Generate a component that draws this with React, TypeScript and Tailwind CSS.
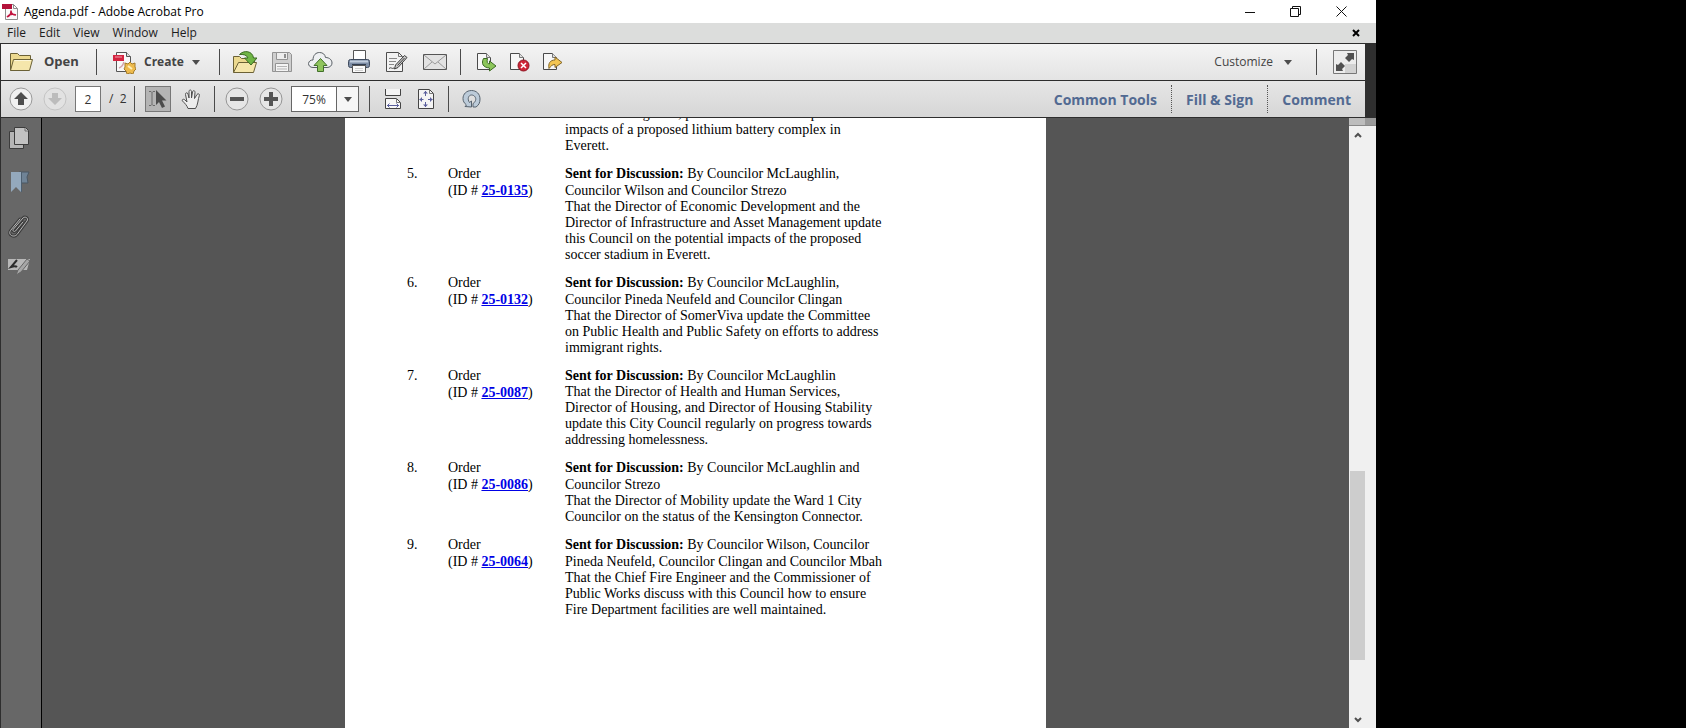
import type { ReactNode } from "react";

type AgendaItem = {
  no: string;
  id: string;
  by: string;
  text: string;
};

const agenda: AgendaItem[] = [
  {
    no: "5.",
    id: "25-0135",
    by: "By Councilor McLaughlin, Councilor Wilson and Councilor Strezo",
    text: "That the Director of Economic Development and the Director of Infrastructure and Asset Management update this Council on the potential impacts of the proposed soccer stadium in Everett.",
  },
  {
    no: "6.",
    id: "25-0132",
    by: "By Councilor McLaughlin, Councilor Pineda Neufeld and Councilor Clingan",
    text: "That the Director of SomerViva update the Committee on Public Health and Public Safety on efforts to address immigrant rights.",
  },
  {
    no: "7.",
    id: "25-0087",
    by: "By Councilor McLaughlin",
    text: "That the Director of Health and Human Services, Director of Housing, and Director of Housing Stability update this City Council regularly on progress towards addressing homelessness.",
  },
  {
    no: "8.",
    id: "25-0086",
    by: "By Councilor McLaughlin and Councilor Strezo",
    text: "That the Director of Mobility update the Ward 1 City Councilor on the status of the Kensington Connector.",
  },
  {
    no: "9.",
    id: "25-0064",
    by: "By Councilor Wilson, Councilor Pineda Neufeld, Councilor Clingan and Councilor Mbah",
    text: "That the Chief Fire Engineer and the Commissioner of Public Works discuss with this Council how to ensure Fire Department facilities are well maintained.",
  },
];

const menus = ["File", "Edit", "View", "Window", "Help"];

const panels = ["Common Tools", "Fill & Sign", "Comment"];

const Icon = ({
  w = 24,
  h = 24,
  children,
}: {
  w?: number;
  h?: number;
  children: ReactNode;
}) => (
  <svg
    width={w}
    height={h}
    viewBox={`0 0 ${w} ${h}`}
    fill="none"
    aria-hidden="true"
    className="block shrink-0"
  >
    {children}
  </svg>
);

const IconButton = ({
  label,
  className = "",
  children,
}: {
  label: string;
  className?: string;
  children: ReactNode;
}) => (
  <button
    type="button"
    aria-label={label}
    className={`flex shrink-0 items-center justify-center ${className}`}
  >
    {children}
  </button>
);

const Separator = () => <div className="h-[26px] w-px shrink-0 bg-[#4a4a4a]" />;

const Caret = () => (
  <Icon w={8} h={5}>
    <path d="M0 0h8L4 5z" fill="#4d4d4d" />
  </Icon>
);

/* Page outline with a folded corner, shared by the export icons */
const Sheet = () => (
  <>
    <path d="M.5 1.500h9l4 4v12H.5z" fill="#f7f7f7" stroke="#4a4a4a" />
    <path d="M9.500 1.500v4h4" fill="#dedede" stroke="#777" />
  </>
);

const AppIcon = () => (
  <Icon w={16} h={17}>
    <path d="M3.500 1.500h8l4 4v11h-12z" fill="#fafafa" stroke="#8c8c8c" />
    <path d="M11.500 1.500v4h4" stroke="#8c8c8c" />
    <path d="M0 1h10v5H0z" fill="#b3123a" />
    <path
      d="M5 14c3-1 4-4 4-6.500M9 7.500c0 3 2 4.500 5 4.500M5 14c2-2.500 6-3 9-2"
      stroke="#c2143f"
      strokeWidth="1.500"
    />
  </Icon>
);

const FolderIcon = () => (
  <Icon w={25} h={20}>
    <path d="M1.500 18.500v-17h7l2 2h11v4" fill="#ecd98f" stroke="#6b6136" />
    <path d="M1.500 18.500l3-11h19l-3 11z" fill="#f5e6ab" stroke="#6b6136" />
    <path d="M5.500 8.500H22" stroke="#fdf7d9" />
  </Icon>
);

const CreateIcon = () => (
  <Icon w={23} h={23}>
    <path d="M3.500 1.500h10l4 4v15h-14z" fill="#f8f8f8" stroke="#555" />
    <path d="M13.500 1.500v4h4" fill="#ddd" stroke="#555" />
    <path d="M0 4h11v6H0z" fill="#d42440" />
    <path d="M2 6h7" stroke="#f0a0ac" />
    <path d="M6 17c3-1 4-3 5-6" stroke="#d5a5ac" strokeWidth="1.500" />
    <path
      d="M12 12l3 1 2-2 2 2 3-1v4l1 2-2 2-1 3-3-1-3 1-1-3-2-2 1-2z"
      fill="#eebb4d"
      stroke="#a57d2c"
    />
    <path d="M15 15l4 3" stroke="#fff0b8" strokeWidth="2" />
  </Icon>
);

const OpenFromIcon = () => (
  <Icon w={25} h={24}>
    <path d="M1.500 22.500v-16h6l2 2h13v5" fill="#ecd98f" stroke="#6b6136" />
    <path d="M1.500 22.500l5-10h18l-3 10z" fill="#f5e6ab" stroke="#6b6136" />
    <path
      d="M7.500 4.500c4-4.500 13-4 14 3.500H25l-6 7-6.500-7H16c-1-3-5-4-8.500-3.500z"
      fill="#6fb545"
      stroke="#3c6b24"
    />
  </Icon>
);

const SaveIcon = () => (
  <Icon w={21} h={21}>
    <path d="M.500.500h17l2 2v17H.500z" fill="#cfcfcf" stroke="#939393" />
    <path d="M4.500.500h11v7h-11z" fill="#ededed" stroke="#939393" />
    <path d="M12 2h2v4h-2z" fill="#8d8d8d" />
    <path d="M3.500 11.500h13v8h-13z" fill="#f4f4f4" stroke="#939393" />
    <path d="M5 14.500h10M5 17h10" stroke="#b5b5b5" />
  </Icon>
);

const CloudIcon = () => (
  <Icon w={25} h={22}>
    <path
      d="M5 16.500C2 16.500.500 14.500.500 12.500 1 10 2.500 9 5 9c0-5 3-7.500 6.500-7.500s5.500 2 6 5c4 0 6.500 2.500 6.500 5.500 0 2.500-2 4.500-5 4.500z"
      fill="#eef0f2"
      stroke="#5a6066"
    />
    <path
      d="M12.500 7.500l6.500 7h-3.500v6h-6v-6H6z"
      fill="#8fc45d"
      stroke="#41702a"
    />
  </Icon>
);

const PrintIcon = () => (
  <Icon w={23} h={24}>
    <path d="M5.500 10V.500h12V10" fill="#fff" stroke="#555" />
    <rect x=".5" y="9.500" width="21" height="8" rx="2" fill="#7e8ea6" stroke="#3f4b5e" />
    <path d="M2 11.500h18" stroke="#c1cddd" strokeWidth="2" />
    <path d="M4 14.500h14" stroke="#333f52" />
    <path d="M4.500 15.500h13v7h-13z" fill="#fafafa" stroke="#555" />
    <path d="M7 18.500h8M7 20.500h8" stroke="#d0d0d0" />
  </Icon>
);

const SignIcon = () => (
  <Icon w={22} h={22}>
    <path d="M.500 1.500h12l4 4v15H.500z" fill="#f3f3f3" stroke="#4d4d4d" />
    <path d="M12.500 1.500v4h4" stroke="#777" />
    <path d="M3 7.500h8M3 10.500h7M3 13.500h5" stroke="#8a8a8a" />
    <path d="M3 17.500c2-2 3 1 5-.500" stroke="#444" />
    <path d="M18.500 4.500l2.500 2-9 10-3.500 1.500 1-4z" fill="#c9c9c9" stroke="#3d3d3d" />
    <path d="M11.500 14.500l7-7.500" stroke="#3d3d3d" />
  </Icon>
);

const MailIcon = () => (
  <Icon w={25} h={17}>
    <path d="M.500.500h23v15H.500z" fill="#e2e2e2" stroke="#555" />
    <path d="M1 1l11 9 11-9M1 15l8-7M23 15l-8-7" stroke="#9a9a9a" />
  </Icon>
);

const SendIcon = () => (
  <Icon w={20} h={20}>
    <Sheet />
    <path
      d="M6.500 6.500c-2.500 5-.500 9 6 9.500v3l6.500-5-6.500-5v3c-2 0-3-2-2-5.500z"
      fill="#8cc65a"
      stroke="#3c6b24"
    />
  </Icon>
);

const RemoveIcon = () => (
  <Icon w={20} h={20}>
    <Sheet />
    <circle cx="13.500" cy="13.500" r="5.500" fill="#cf2436" stroke="#8c1522" />
    <path d="M11 11l5 5M16 11l-5 5" stroke="#fff" strokeWidth="1.500" />
  </Icon>
);

const ShareIcon = () => (
  <Icon w={20} h={20}>
    <Sheet />
    <path
      d="M6 16.500c-1-5 1-8.500 6-8.500V5l7 5.500-7 5v-3c-3 0-4 1.500-6 4z"
      fill="#f3c552"
      stroke="#83672a"
    />
  </Icon>
);

const ExpandIcon = () => (
  <Icon w={24} h={24}>
    <path d="M.500.500h23v23H.500z" fill="#ececec" stroke="#777" />
    <path d="M12 14h11v9H12z" fill="#d2d2d2" />
    <path d="M14 3h7v7l-2-1-3 3-4-4 3-3z" fill="#505050" />
    <path d="M10 21H3v-7l2 1 3-3 4 4-3 3z" fill="#505050" />
  </Icon>
);

const ArrowCircle = ({ down = false }: { down?: boolean }) => (
  <Icon w={24} h={24}>
    <circle
      cx="12"
      cy="12"
      r="11"
      fill={down ? "#e2e2e2" : "#f0f0f0"}
      stroke={down ? "#c4c4c4" : "#9a9a9a"}
    />
    {down ? (
      <path d="M9 6h6v5h4l-7 7-7-7h4z" fill="#bcbcbc" />
    ) : (
      <path d="M12 5l7 7h-4v6H9v-6H5z" fill="#4d4d4d" />
    )}
  </Icon>
);

const ZoomCircle = ({ plus = false }: { plus?: boolean }) => (
  <Icon w={24} h={24}>
    <circle cx="12" cy="12" r="11" fill="#e6e6e6" stroke="#959595" />
    <path d="M5 10h14v4H5z" fill="#555" />
    {plus && <path d="M10 5h4v14h-4z" fill="#555" />}
  </Icon>
);

const SelectIcon = () => (
  <Icon w={20} h={20}>
    <path d="M1 2.500h2l1 1 1-1h2M4 3.500v12M1 16.500h2l1-1 1 1h2" stroke="#6a6a6a" />
    <path d="M8 1l10.500 10.500h-4.500l3 6-3 1.500-3-6-3 3z" fill="#4c4c4c" />
  </Icon>
);

const HandIcon = () => (
  <Icon w={21} h={21}>
    <path
      d="M7 19.500c-1-3-3-5-5.500-7.500C.500 10.500 2.500 9.500 4 11l2 2L4.500 5.500c-.300-2 2-2.300 2.500-.500L8 9V2.500c0-2 2.500-2 2.500 0V9l1-6c.300-2 2.700-1.500 2.500.300L13.500 9.500 16 5.500c1-1.500 3-.500 2.300 1.200C17 10 17 16 14.500 19.500z"
      fill="#ededed"
      stroke="#4f4f4f"
    />
  </Icon>
);

const FitWidthIcon = () => (
  <Icon w={18} h={22}>
    <path d="M1.500 1v6.500h15V1" fill="#f4f4f4" stroke="#444" />
    <path d="M1.500 20.500v-10h11l4 4v6z" fill="#f8f8f8" stroke="#444" />
    <path d="M12.500 10.500v4h4" stroke="#777" />
    <path d="M3 17.500h12M5.500 15.500l-2 2 2 2M12.500 15.500l2 2-2 2" stroke="#5a5f9c" />
  </Icon>
);

const FitPageIcon = () => (
  <Icon w={18} h={22}>
    <path d="M1.500 1.500h11l4 4v15h-15z" fill="#f4f4f4" stroke="#444" />
    <path d="M12.500 1.500v4h4" stroke="#777" />
    <path
      d="M8.500 3v5M8.500 14v5M2.500 11.500h4M11 11.500h4.500"
      stroke="#5a5f9c"
    />
    <path
      d="M6 5.500h5L8.500 3zM6 16.500h5L8.500 19zM5 9v5l-2.500-2.500zM13 9v5l2.500-2.500z"
      fill="#5a5f9c"
    />
  </Icon>
);

const RotateIcon = () => (
  <Icon w={19} h={20}>
    <path
      d="M3 17.500l6.500.500v-6l-2 1.500C5 10 6.500 6 9.500 6s5 3 4 5.500c-.500 1.500-1.500 2.500-2.500 3v3.500h3c3-2 4-4.500 4-8C18 5 14.500 1.500 9.500 1.500S1 5 1 9.500c0 2.500 1 4.500 3.500 6.500z"
      fill="#bccbd9"
      stroke="#56626e"
    />
  </Icon>
);

const PagesIcon = () => (
  <Icon w={22} h={24}>
    <path d="M1.500 5.500h14v17h-14z" fill="#b5b5b5" stroke="#3c3c3c" />
    <path d="M6.500 1.500h11l3 3v14h-14z" fill="#c2c2c2" stroke="#3c3c3c" />
    <path d="M17 2v3h3" stroke="#6f6f6f" />
  </Icon>
);

const BookmarkIcon = () => (
  <Icon w={22} h={24}>
    <path d="M11 2h10l-2 5 1 6h-9z" fill="#6f8396" stroke="#4b5763" />
    <path d="M3 2h10v20l-5-5-5 5z" fill="#94a9bd" />
    <path d="M13.500 2v20" stroke="#4d5f70" />
  </Icon>
);

const ClipIcon = () => (
  <Icon w={22} h={24}>
    <g strokeLinecap="round" strokeLinejoin="round">
      <path
        d="M15 8l-7.500 9c-1.500 1.500-3.500-.500-2-2L15 4c2-2 6 0 4 3L9 20.500c-3 3.500-9.500.500-6.500-4L12 5"
        stroke="#3d3d3d"
        strokeWidth="3"
      />
      <path
        d="M15 8l-7.500 9c-1.500 1.500-3.500-.500-2-2L15 4c2-2 6 0 4 3L9 20.500c-3 3.500-9.500.500-6.500-4L12 5"
        stroke="#b9b9b9"
      />
    </g>
  </Icon>
);

const SignaturesIcon = () => (
  <Icon w={23} h={18}>
    <path d="M0 1h22l-3 11H0z" fill="#b8b8b8" />
    <path d="M9 2L3 9c3-1 5-1 6 0" stroke="#2d2d2d" strokeWidth="2" />
    <path d="M19 1l3 2-9 11-5 3 2-5z" fill="#a6a6a6" stroke="#666" />
  </Icon>
);

const TitleBar = () => (
  <header className="flex h-[23px] shrink-0 items-center bg-white pr-[29px] pl-[2px] text-[12px] text-black">
    <AppIcon />
    <h1 className="ml-[6px] flex-1">Agenda.pdf - Adobe Acrobat Pro</h1>
    <IconButton label="Minimize" className="mr-[35px]">
      <Icon w={10} h={10}>
        <path d="M0 5.500h10" stroke="#111" />
      </Icon>
    </IconButton>
    <IconButton label="Restore" className="mr-[35px]">
      <Icon w={11} h={11}>
        <path d="M.500 2.500h8v8h-8zM2.500 2.500v-2h8v8h-2" stroke="#111" />
      </Icon>
    </IconButton>
    <IconButton label="Close">
      <Icon w={11} h={11}>
        <path d="M.500.500l10 10M10.500.500l-10 10" stroke="#111" />
      </Icon>
    </IconButton>
  </header>
);

const MenuBar = () => (
  <nav className="flex h-5 shrink-0 items-center bg-[#dcdddc] pr-4 pl-[7px] text-[12px] text-[#1c1c1c]">
    <div className="flex flex-1 gap-[13px]">
      {menus.map((menu) => (
        <button key={menu} type="button">
          {menu}
        </button>
      ))}
    </div>
    <IconButton label="Close document">
      <Icon w={8} h={8}>
        <path d="M1 1l6 6M7 1L1 7" stroke="#000" strokeWidth="2" />
      </Icon>
    </IconButton>
  </nav>
);

const FileToolbar = () => (
  <div className="flex h-[37px] items-center border-b border-[#2e2e2e] bg-linear-to-b from-[#f4f4f4] to-[#e4e4e4] px-2 text-[#444]">
    <button type="button" className="flex w-[87px] items-center gap-[10px] text-[13px] font-bold">
      <FolderIcon />
      Open
    </button>
    <Separator />
    <button
      type="button"
      className="ml-4 flex w-[106px] items-center gap-2 text-[12px] font-bold"
    >
      <CreateIcon />
      Create
      <Caret />
    </button>
    <Separator />
    <div className="ml-3 flex w-[228px] items-center gap-[15px]">
      <IconButton label="Open from account">
        <OpenFromIcon />
      </IconButton>
      <IconButton label="Save">
        <SaveIcon />
      </IconButton>
      <IconButton label="Save to cloud">
        <CloudIcon />
      </IconButton>
      <IconButton label="Print">
        <PrintIcon />
      </IconButton>
      <IconButton label="Sign">
        <SignIcon />
      </IconButton>
      <IconButton label="Email">
        <MailIcon />
      </IconButton>
    </div>
    <Separator />
    <div className="ml-4 flex flex-1 items-center gap-[13px]">
      <IconButton label="Insert page">
        <SendIcon />
      </IconButton>
      <IconButton label="Delete page">
        <RemoveIcon />
      </IconButton>
      <IconButton label="Extract page">
        <ShareIcon />
      </IconButton>
    </div>
    <button type="button" className="mr-6 flex items-center gap-[11px] text-[12px]">
      Customize
      <Caret />
    </button>
    <Separator />
    <IconButton label="Read mode" className="ml-4">
      <ExpandIcon />
    </IconButton>
  </div>
);

const ViewToolbar = () => (
  <div className="flex h-[37px] items-center border-b border-[#2e2e2e] bg-linear-to-b from-[#e6e6e6] to-[#d6d6d6] pl-[8px] text-[12px] text-[#333]">
    <IconButton label="Previous page">
      <ArrowCircle />
    </IconButton>
    <IconButton label="Next page" className="ml-[10px]">
      <ArrowCircle down />
    </IconButton>
    <input
      aria-label="Page number"
      defaultValue="2"
      className="ml-[8px] h-[26px] w-[26px] border border-[#777] bg-white text-center"
    />
    <span className="ml-2 w-[25px]">/&nbsp; 2</span>
    <Separator />
    <IconButton
      label="Selection tool"
      className="ml-[10px] h-[26px] w-[26px] border border-[#777] bg-[#b4b4b4]"
    >
      <SelectIcon />
    </IconButton>
    <IconButton label="Hand tool" className="mr-[12px] ml-[10px]">
      <HandIcon />
    </IconButton>
    <Separator />
    <IconButton label="Zoom out" className="ml-[10px]">
      <ZoomCircle />
    </IconButton>
    <IconButton label="Zoom in" className="mr-[8px] ml-[10px]">
      <ZoomCircle plus />
    </IconButton>
    <input
      aria-label="Zoom level"
      defaultValue="75%"
      className="h-[26px] w-[46px] border border-[#666] bg-white text-center"
    />
    <IconButton
      label="Zoom presets"
      className="mr-[10px] h-[26px] w-[22px] border border-l-0 border-[#666] bg-[#f6f6f6]"
    >
      <Caret />
    </IconButton>
    <Separator />
    <IconButton label="Fit width" className="ml-[14px]">
      <FitWidthIcon />
    </IconButton>
    <IconButton label="Fit page" className="mr-[13px] ml-[15px]">
      <FitPageIcon />
    </IconButton>
    <Separator />
    <IconButton label="Rotate" className="ml-[13px]">
      <RotateIcon />
    </IconButton>
    <div className="ml-auto flex text-[14px] font-bold text-[#526a92]">
      {panels.map((panel) => (
        <button
          key={panel}
          type="button"
          className="h-[28px] border-l border-dotted border-[#555] px-[14px] first:border-l-0"
        >
          {panel}
        </button>
      ))}
    </div>
  </div>
);

const SidePanel = () => (
  <aside className="flex w-[42px] shrink-0 flex-col items-start gap-[20px] border-r border-l border-r-black border-l-[#2e2e2e] bg-[#676767] pt-2 pl-[7px]">
    <IconButton label="Page thumbnails">
      <PagesIcon />
    </IconButton>
    <IconButton label="Bookmarks">
      <BookmarkIcon />
    </IconButton>
    <IconButton label="Attachments">
      <ClipIcon />
    </IconButton>
    <IconButton label="Signatures">
      <SignaturesIcon />
    </IconButton>
  </aside>
);

const DocumentPage = () => (
  <article className="w-[701px] bg-white pl-[62px] font-['Liberation_Serif','Times_New_Roman',serif] text-[14px] text-black">
    <table className="-mt-3 table-fixed border-collapse">
      <colgroup>
        <col className="w-[41px]" />
        <col className="w-[117px]" />
        <col className="w-[318px]" />
      </colgroup>
      <tbody className="align-top">
        <tr>
          <td />
          <td />
          <td className="pb-[11px] leading-[16px]">
            for the existing sites, permit conditions and potential impacts of a
            proposed lithium battery complex in Everett.
          </td>
        </tr>
        {agenda.map((item) => (
          <tr key={item.id}>
            <td className="leading-[17px]">{item.no}</td>
            <td className="leading-[17px]">
              Order
              <br />
              (ID #{" "}
              <a href={`#${item.id}`} className="font-bold text-[#0000e6] underline">
                {item.id}
              </a>
              )
            </td>
            <td className="pb-[11px]">
              <p className="leading-[17px]">
                <b>Sent for Discussion:</b> {item.by}
              </p>
              <p className="leading-[16px]">{item.text}</p>
            </td>
          </tr>
        ))}
      </tbody>
    </table>
  </article>
);

const ScrollBar = () => (
  <div className="flex w-[27px] shrink-0 flex-col bg-[#f0f0f0]">
    <div className="flex h-2 border-b border-[#888]">
      <div className="w-4 bg-[#bdbdbd]" />
      <div className="flex-1 bg-[#9a9a9a]" />
    </div>
    <IconButton label="Scroll up" className="h-[18px] w-[17px]">
      <Icon w={8} h={6}>
        <path d="M1 5l3-3 3 3" stroke="#505050" strokeWidth="2" />
      </Icon>
    </IconButton>
    <div className="flex-[327]" />
    <div className="ml-px w-[15px] flex-[189] bg-[#cdcdcd]" />
    <div className="flex-[51]" />
    <IconButton label="Scroll down" className="h-[17px] w-[17px]">
      <Icon w={8} h={6}>
        <path d="M1 1l3 3 3-3" stroke="#505050" strokeWidth="2" />
      </Icon>
    </IconButton>
  </div>
);

export default function App() {
  return (
    <div className="flex h-screen overflow-hidden bg-black pr-[310px] font-['Open_Sans','Noto_Sans',sans-serif]">
      <div className="flex min-w-0 flex-1 flex-col">
        <TitleBar />
        <MenuBar />
        <div className="shrink-0 border-t border-l border-[#2e2e2e] bg-[#2f2f2f] pr-[11px]">
          <FileToolbar />
          <ViewToolbar />
        </div>
        <div className="flex min-h-0 flex-1">
          <SidePanel />
          <main className="flex min-w-0 flex-1 justify-center overflow-hidden bg-[#555]">
            <DocumentPage />
          </main>
          <ScrollBar />
        </div>
      </div>
    </div>
  );
}
